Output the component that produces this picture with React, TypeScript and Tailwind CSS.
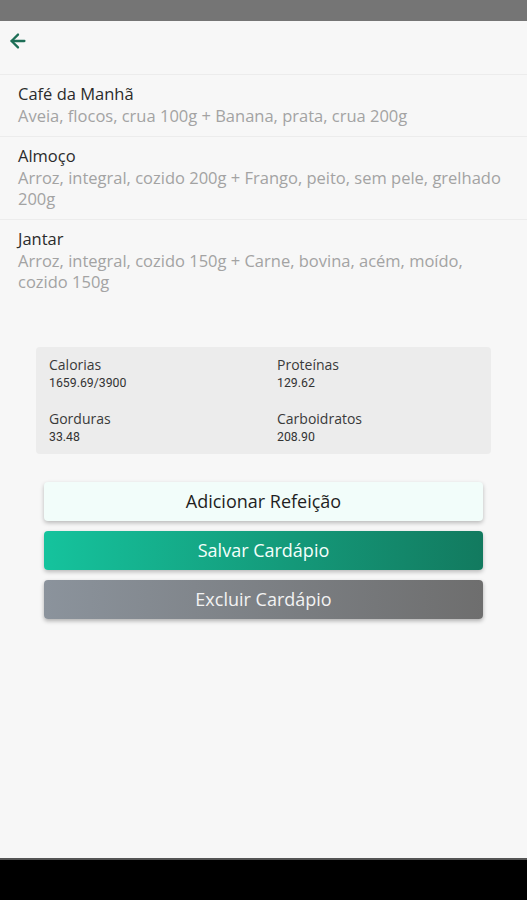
import { ArrowLeft } from 'lucide-react';

const MEALS = [
  { name: 'Café da Manhã', items: 'Aveia, flocos, crua 100g + Banana, prata, crua 200g' },
  { name: 'Almoço', items: 'Arroz, integral, cozido 200g + Frango, peito, sem pele, grelhado 200g' },
  { name: 'Jantar', items: 'Arroz, integral, cozido 150g + Carne, bovina, acém, moído, cozido 150g' },
];

const STATS = [
  { label: 'Calorias', value: '1659.69/3900' },
  { label: 'Proteínas', value: '129.62' },
  { label: 'Gorduras', value: '33.48' },
  { label: 'Carboidratos', value: '208.90' },
];

export default function App() {
  return (
    <div className="w-[527px] h-[900px] flex flex-col bg-[#f7f7f7] overflow-hidden" style={{ fontFamily: '"Open Sans", "Noto Sans", sans-serif' }}>
      {/* status bar */}
      <div className="h-[21px] bg-[#757575] shrink-0" />

      {/* header */}
      <div className="h-[54px] px-[7px] pt-[9px] border-b border-[#ececec] shrink-0">
        <ArrowLeft size={22} strokeWidth={2.5} className="text-[#1d6e56]" />
      </div>

      {/* meals */}
      <div className="flex flex-col">
        {MEALS.map((m, i) => (
          <div key={m.name} className={`pl-[18px] pr-[17px] pt-[8px] pb-[10px] ${i < MEALS.length - 1 ? 'border-b border-[#ececec]' : ''}`}>
            <div className="text-[16.5px] leading-[22px] text-[#2b2b2b]">{m.name}</div>
            <div className="text-[16.5px] leading-[21px] text-[#a3a3a3]">{m.items}</div>
          </div>
        ))}
      </div>

      {/* stats */}
      <div className="mx-[36px] mt-[45px] rounded-[4px] bg-[#ececec] pl-[13px] pt-[9px] pb-[8px] grid grid-cols-[228px_1fr] gap-y-[18px]">
        {STATS.map((s) => (
          <div key={s.label} className="flex flex-col">
            <span className="text-[14px] leading-[18px] text-[#3a3a3a]">{s.label}</span>
            <span className="text-[12.3px] leading-[18px] text-[#333]" style={{ fontFamily: 'Roboto, sans-serif' }}>{s.value}</span>
          </div>
        ))}
      </div>

      {/* buttons */}
      <div className="mx-[44px] mt-[28px] flex flex-col gap-[10px]">
        <button className="h-[39px] rounded-[4px] bg-[#f2fdfa] text-[18px] text-[#1f1f1f] shadow-[0_2px_4px_rgba(0,0,0,0.25)]">
          Adicionar Refeição
        </button>
        <button className="h-[39px] rounded-[4px] bg-gradient-to-r from-[#15c39d] to-[#127a5f] text-[18px] text-[#f4fffb] shadow-[0_2px_4px_rgba(0,0,0,0.25)]">
          Salvar Cardápio
        </button>
        <button className="h-[39px] rounded-[4px] bg-gradient-to-r from-[#8b939c] to-[#6e6e6e] text-[18px] text-[#f2f2f2] shadow-[0_2px_4px_rgba(0,0,0,0.3)]">
          Excluir Cardápio
        </button>
      </div>

      <div className="flex-1" />
      {/* nav bar */}
      <div className="h-[42px] bg-black border-t-2 border-[#555] shrink-0" />
    </div>
  );
}
